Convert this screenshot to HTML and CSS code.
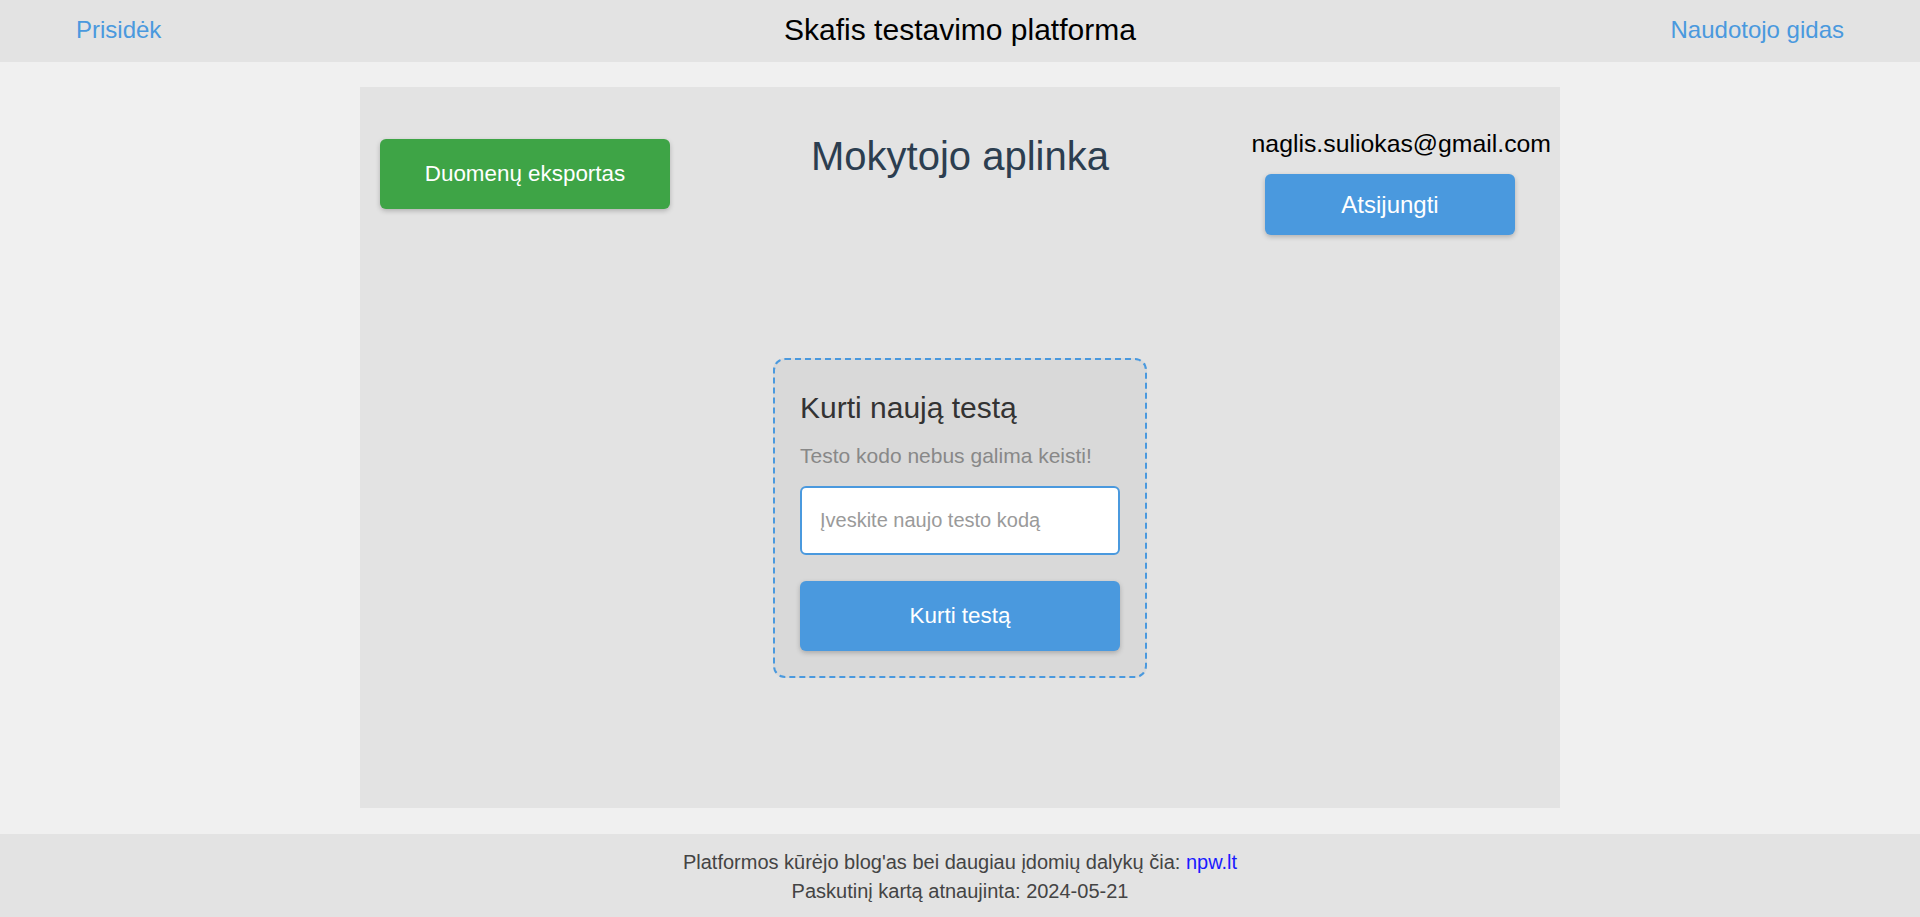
FILE: index.html
```html
<!DOCTYPE html>
<html lang="lt">
<head>
<meta charset="utf-8">
<title>Skafis testavimo platforma</title>
<link rel="stylesheet" href="styles.css">
</head>
<body>
<header class="topbar">
  <a class="topbar-link topbar-left" href="#">Prisidėk</a>
  <div class="topbar-title">Skafis testavimo platforma</div>
  <a class="topbar-link topbar-right" href="#">Naudotojo gidas</a>
</header>

<main class="panel">
  <div class="panel-head">
    <div class="head-left">
      <button class="btn btn-green">Duomenų eksportas</button>
    </div>
    <h1 class="panel-title">Mokytojo aplinka</h1>
    <div class="head-right">
      <div class="user-email">naglis.suliokas@gmail.com</div>
      <button class="btn btn-blue btn-logout">Atsijungti</button>
    </div>
  </div>

  <section class="create-card">
    <h2 class="create-title">Kurti naują testą</h2>
    <p class="create-note">Testo kodo nebus galima keisti!</p>
    <input class="create-input" type="text" placeholder="Įveskite naujo testo kodą">
    <button class="btn btn-blue btn-create">Kurti testą</button>
  </section>
</main>

<footer class="footer">
  <div class="footer-line">Platformos kūrėjo blog'as bei daugiau įdomių dalykų čia: <a class="footer-link" href="#">npw.lt</a></div>
  <div class="footer-line">Paskutinį kartą atnaujinta: 2024-05-21</div>
</footer>
</body>
</html>
```

FILE: styles.css
```css
* {
  box-sizing: border-box;
}

html, body {
  margin: 0;
  padding: 0;
}

body {
  background: #f0f0f0;
  font-family: "Liberation Sans", Arial, sans-serif;
  color: #000;
}

/* Top bar */
.topbar {
  height: 62px;
  background: #e3e3e3;
  display: grid;
  grid-template-columns: 1fr auto 1fr;
  align-items: center;
  padding: 0 76px 3px 76px;
}

.topbar-link {
  color: #4a99de;
  font-size: 24px;
  text-decoration: none;
}

.topbar-left {
  justify-self: start;
}

.topbar-right {
  justify-self: end;
}

.topbar-title {
  font-size: 30px;
  color: #000;
}

/* Main panel */
.panel {
  width: 1200px;
  margin: 25px auto 0;
  background: #e3e3e3;
  padding: 0 9px 130px 9px;
}

.panel-head {
  display: grid;
  grid-template-columns: 1fr auto 1fr;
  align-items: start;
}

.head-left {
  justify-self: start;
  padding-left: 11px;
  padding-top: 52px;
}

.panel-title {
  margin: 47px 0 0;
  font-size: 40px;
  font-weight: normal;
  color: #2c3e50;
}

.head-right {
  justify-self: end;
  display: flex;
  flex-direction: column;
  align-items: flex-end;
  padding-top: 43px;
}

.user-email {
  font-size: 24.8px;
  color: #000;
}

.btn {
  border: none;
  border-radius: 6px;
  color: #fff;
  font-family: "Liberation Sans", Arial, sans-serif;
  cursor: pointer;
  box-shadow: 0 2px 5px rgba(0, 0, 0, 0.22);
}

.btn-green {
  width: 290px;
  height: 70px;
  background: #3ea446;
  font-size: 22.4px;
}

.btn-blue {
  background: #4a99de;
}

.btn-logout {
  width: 250px;
  height: 61px;
  margin-top: 16px;
  margin-right: 36px;
  font-size: 24px;
}

/* Create card */
.create-card {
  width: 374px;
  margin: 123px auto 0;
  padding: 25px;
  border: 2px dashed #4a99de;
  border-radius: 12px;
  background: #d9d9d9;
  display: flex;
  flex-direction: column;
}

.create-title {
  margin: 6px 0 0;
  font-size: 30px;
  font-weight: normal;
  color: #333;
}

.create-note {
  margin: 19px 0 18px;
  font-size: 21px;
  color: #888;
}

.create-input {
  width: 100%;
  height: 69px;
  border: 2px solid #4a99de;
  border-radius: 6px;
  background: #fff;
  padding: 0 18px;
  font-family: "Liberation Sans", Arial, sans-serif;
  font-size: 20px;
  outline: none;
}

.create-input::placeholder {
  color: #9a9a9a;
}

.btn-create {
  width: 100%;
  height: 70px;
  margin-top: 26px;
  font-size: 22.4px;
}

/* Footer */
.footer {
  margin-top: 26px;
  background: #e3e3e3;
  padding: 14px 0 12px;
  text-align: center;
  font-size: 20px;
  line-height: 29px;
  color: #444;
}

.footer-link {
  color: #1a1aff;
  text-decoration: none;
}
```
